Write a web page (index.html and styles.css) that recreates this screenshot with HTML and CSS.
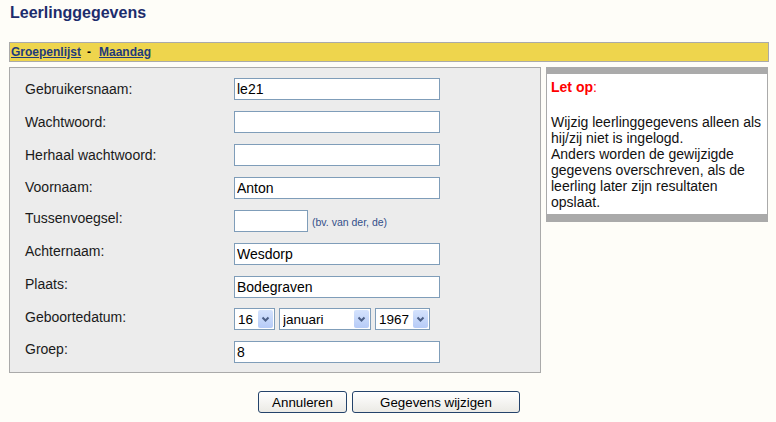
FILE: index.html
```html
<!DOCTYPE html>
<html lang="nl">
<head>
  <meta charset="UTF-8" />
  <title>Leerlinggegevens</title>
  <link rel="stylesheet" href="styles.css">
</head>
<body>
  <div class="page">
    <h1 class="page-title">Leerlinggegevens</h1>

    <div class="crumbs">
      <a href="#">Groepenlijst</a><span class="sep">-</span><a href="#">Maandag</a>
    </div>

    <div class="main">
      <form class="panel" id="pupilForm">
        <div class="row">
          <label for="username">Gebruikersnaam:</label>
          <div class="field"><input class="text" id="username" type="text" value="le21"></div>
        </div>
        <div class="row">
          <label for="password">Wachtwoord:</label>
          <div class="field"><input class="text" id="password" type="password"></div>
        </div>
        <div class="row">
          <label for="password2">Herhaal wachtwoord:</label>
          <div class="field"><input class="text" id="password2" type="password"></div>
        </div>
        <div class="row">
          <label for="firstname">Voornaam:</label>
          <div class="field"><input class="text" id="firstname" type="text" value="Anton"></div>
        </div>
        <div class="row">
          <label for="infix">Tussenvoegsel:</label>
          <div class="field">
            <input class="text short" id="infix" type="text">
            <span class="hint">(bv. van der, de)</span>
          </div>
        </div>
        <div class="row">
          <label for="lastname">Achternaam:</label>
          <div class="field"><input class="text" id="lastname" type="text" value="Wesdorp"></div>
        </div>
        <div class="row">
          <label for="city">Plaats:</label>
          <div class="field"><input class="text" id="city" type="text" value="Bodegraven"></div>
        </div>
        <div class="row date">
          <label for="day">Geboortedatum:</label>
          <div class="field">
            <div class="select day">
              <select id="day"><option>16</option></select>
              <span class="arrow"><svg width="15" height="18" viewBox="0 0 15 18"><path d="M4.5 7.5 L7.5 10.5 L10.5 7.5" fill="none" stroke="#4b5f86" stroke-width="2"/></svg></span>
            </div>
            <div class="select month">
              <select id="month"><option>januari</option></select>
              <span class="arrow"><svg width="15" height="18" viewBox="0 0 15 18"><path d="M4.5 7.5 L7.5 10.5 L10.5 7.5" fill="none" stroke="#4b5f86" stroke-width="2"/></svg></span>
            </div>
            <div class="select year">
              <select id="year"><option>1967</option></select>
              <span class="arrow"><svg width="15" height="18" viewBox="0 0 15 18"><path d="M4.5 7.5 L7.5 10.5 L10.5 7.5" fill="none" stroke="#4b5f86" stroke-width="2"/></svg></span>
            </div>
          </div>
        </div>
        <div class="row">
          <label for="group">Groep:</label>
          <div class="field"><input class="text" id="group" type="text" value="8"></div>
        </div>
      </form>

      <div class="note">
        <p class="note-title">Let op<span>:</span></p>
        <p>Wijzig leerlinggegevens alleen als hij/zij niet is ingelogd.<br>
        Anders worden de gewijzigde gegevens overschreven, als de leerling later zijn resultaten opslaat.</p>
      </div>
    </div>

    <div class="actions">
      <button type="button" class="btn cancel">Annuleren</button>
      <button type="submit" class="btn save" form="pupilForm">Gegevens wijzigen</button>
    </div>
  </div>
</body>
</html>
```

FILE: styles.css
```css
body {
  margin: 0;
  background-color: #fefdf8;
  font-family: 'Liberation Sans', Arial, sans-serif;
  font-size: 14px;
  color: #1a1a1a;
}

.page {
  width: 760px;
  margin-left: 9px;
}

.page-title {
  margin: 0;
  padding: 3px 0 0 1px;
  font-size: 16px;
  line-height: 20px;
  color: #1c2c6c;
}

.crumbs {
  margin-top: 19px;
  height: 18px;
  padding-left: 1px;
  border: 1px solid #aaa;
  background-color: #eed54d;
  font-size: 12px;
  font-weight: bold;
  line-height: 18px;
}

.crumbs a {
  color: #1f3b7b;
}

.crumbs .sep {
  margin: 0 8px 0 6px;
  color: #000;
}

.main {
  display: flex;
  align-items: flex-start;
  gap: 5px;
  margin-top: 5px;
}

.panel {
  display: flex;
  flex-direction: column;
  gap: 11px;
  width: 532px;
  box-sizing: border-box;
  margin: 0;
  padding: 10px 0 9px 15px;
  border: 1px solid #aaa;
  background-color: #ececec;
}

.row {
  display: flex;
  align-items: center;
}

.row label {
  width: 209px;
  flex: none;
  line-height: 16px;
}

/* labels drift up a little further down the form */
.row:nth-child(4) label { margin-bottom: 2px; }
.row:nth-child(n+5) label { margin-bottom: 6px; }
.row.date label { margin-bottom: 4px; }

.row.date {
  margin-top: -1px;
}

.field {
  display: flex;
  align-items: baseline;
}

input.text {
  width: 206px;
  height: 22px;
  box-sizing: border-box;
  margin: 0;
  padding: 0 2px;
  border: 1px solid #7f9db9;
  background-color: #fff;
  font: 14px 'Liberation Sans', Arial, sans-serif;
  color: #000;
}

input.short {
  width: 74px;
}

.hint {
  margin-left: 4px;
  font-size: 10.5px;
  color: #34508a;
}

.select {
  display: inline-flex;
  height: 22px;
  box-sizing: border-box;
  margin-right: 4px;
  padding: 1px;
  border: 1px solid #7f9db9;
  background-color: #fff;
}

.select.day { width: 41px; }
.select.month { width: 92px; }
.select.year { width: 55px; }

.select select {
  flex: 1;
  min-width: 0;
  margin: 0;
  padding: 0 0 0 2px;
  border: 0;
  outline: none;
  background: transparent;
  -webkit-appearance: none;
  appearance: none;
  font: 13.5px 'Liberation Sans', Arial, sans-serif;
  color: #000;
}

.arrow {
  display: flex;
  flex: none;
  width: 15px;
  height: 18px;
  border-radius: 2px;
  background: linear-gradient(#d5e3fd, #b6cbf7);
}

.note {
  width: 222px;
  box-sizing: border-box;
  padding: 5px 2px 4px 4px;
  border: 1px solid #aaa;
  border-top-width: 7px;
  border-bottom-width: 8px;
  background-color: #fff;
  line-height: 16px;
  color: #111;
}

.note p {
  margin: 0;
}

.note .note-title {
  margin-bottom: 19px;
  font-weight: bold;
  color: #f00;
}

.note-title span {
  font-weight: normal;
}

.actions {
  display: flex;
  justify-content: center;
  gap: 5px;
  margin-top: 18px;
}

.btn {
  height: 22px;
  margin: 0;
  padding: 0;
  border: 1px solid #24436b;
  border-radius: 3px;
  background: linear-gradient(#ffffff, #ebeae5);
  font: 10pt 'Liberation Sans', Arial, sans-serif;
  color: #000;
}

.btn.cancel { width: 89px; }
.btn.save { width: 168px; }
```
